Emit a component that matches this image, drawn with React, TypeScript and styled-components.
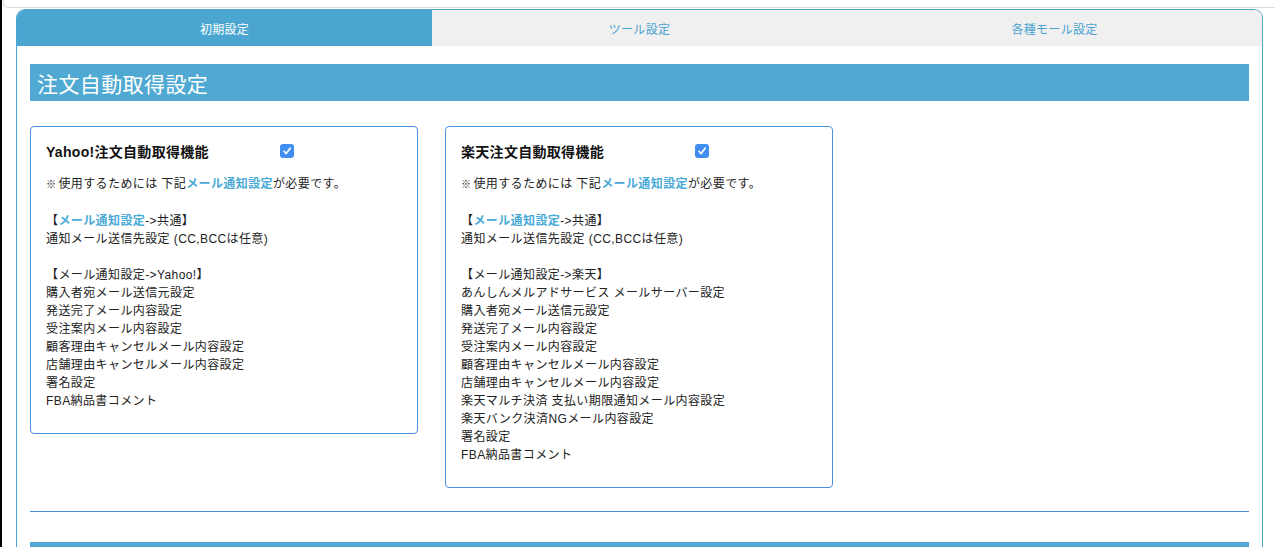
import React from "react";
import styled, { createGlobalStyle } from "styled-components";

const GlobalStyle = createGlobalStyle`
  html, body { margin: 0; padding: 0; background: #fff; }
  body {
    font-family: "Liberation Sans", "Noto Sans CJK JP", sans-serif;
    color: #222;
    overflow: hidden;
  }
`;

const Page = styled.div`
  height: 547px;
  border-left: 2px solid #000;
  box-sizing: border-box;
  overflow: hidden;
`;

const TopStrip = styled.div`
  height: 7px;
  margin-left: 1px;
  border-left: 1px solid #dcdcdc;
  border-bottom: 1px solid #dcdcdc;
  border-bottom-left-radius: 5px;
`;

const Panel = styled.div`
  margin: 1px 0 0 14px;
  width: 1247px;
  box-sizing: border-box;
  border: 1px solid #4aa5d2;
  border-bottom: none;
  border-radius: 9px 9px 0 0;
  overflow: hidden;
  min-height: 560px;
`;

const Tabs = styled.div`
  display: grid;
  grid-template-columns: repeat(3, 1fr);
  height: 36px;
`;

const Tab = styled.div<{ $active?: boolean }>`
  display: flex;
  align-items: center;
  justify-content: center;
  font-size: 12px;
  letter-spacing: 0.3px;
  background: ${(p) => (p.$active ? "#4aa6d0" : "#f0f0f0")};
  color: ${(p) => (p.$active ? "#fff" : "#4aa3d0")};
`;

const Content = styled.div`
  padding: 18px 13px 0 13px;
`;

const SectionBar = styled.div`
  height: 37px;
  background: #4fa9d2;
  color: #fff;
  font-size: 21px;
  letter-spacing: 0.4px;
  display: flex;
  align-items: center;
  padding-left: 7px;
`;

const CardRow = styled.div`
  display: flex;
  align-items: flex-start;
  gap: 27px;
  margin-top: 25px;
`;

const Card = styled.div`
  width: 388px;
  box-sizing: border-box;
  border: 1px solid #4a90e2;
  border-radius: 4px;
  padding: 14px 15px 23px 15px;
`;

const TitleRow = styled.div`
  display: flex;
  align-items: center;
  height: 20px;
`;

const Title = styled.span`
  width: 234px;
  font-size: 14px;
  font-weight: bold;
  letter-spacing: 0.3px;
  color: #111;
`;

const Check = styled.span`
  width: 14px;
  height: 14px;
  border-radius: 3px;
  background: #3f8ef0;
  display: inline-flex;
  align-items: center;
  justify-content: center;
  margin-top: -1px;
`;

const Body = styled.div`
  margin-top: 14px;
  font-size: 12px;
  line-height: 18px;
  letter-spacing: 0.4px;
  color: #222;
`;

const Line = styled.div`
  min-height: 18px;
  white-space: nowrap;
`;

const Note = styled.span`
  font-size: 10px;
  margin-right: 2px;
`;

const Link = styled.span`
  color: #4aaad6;
  font-weight: bold;
`;

const Rule = styled.div`
  height: 1px;
  background: #4a90d9;
  margin-top: 23px;
`;

const NextBar = styled.div`
  height: 37px;
  background: #4fa9d2;
  margin-top: 30px;
`;

const CheckIcon = () => (
  <Check>
    <svg width="10" height="10" viewBox="0 0 10 10">
      <path d="M2 5.3 L4.1 7.6 L8.2 2.2" fill="none" stroke="#fff" strokeWidth="1.7" strokeLinecap="round" strokeLinejoin="round" />
    </svg>
  </Check>
);

type CardData = { title: string; mall: string; items: string[] };

const cards: CardData[] = [
  {
    title: "Yahoo!注文自動取得機能",
    mall: "Yahoo!",
    items: [
      "購入者宛メール送信元設定",
      "発送完了メール内容設定",
      "受注案内メール内容設定",
      "顧客理由キャンセルメール内容設定",
      "店舗理由キャンセルメール内容設定",
      "署名設定",
      "FBA納品書コメント",
    ],
  },
  {
    title: "楽天注文自動取得機能",
    mall: "楽天",
    items: [
      "あんしんメルアドサービス メールサーバー設定",
      "購入者宛メール送信元設定",
      "発送完了メール内容設定",
      "受注案内メール内容設定",
      "顧客理由キャンセルメール内容設定",
      "店舗理由キャンセルメール内容設定",
      "楽天マルチ決済 支払い期限通知メール内容設定",
      "楽天バンク決済NGメール内容設定",
      "署名設定",
      "FBA納品書コメント",
    ],
  },
];

export default function App() {
  return (
    <>
      <GlobalStyle />
      <Page>
        <TopStrip />
        <Panel>
          <Tabs>
            <Tab $active>初期設定</Tab>
            <Tab>ツール設定</Tab>
            <Tab>各種モール設定</Tab>
          </Tabs>
          <Content>
            <SectionBar>注文自動取得設定</SectionBar>
            <CardRow>
              {cards.map((c) => (
                <Card key={c.mall}>
                  <TitleRow>
                    <Title>{c.title}</Title>
                    <CheckIcon />
                  </TitleRow>
                  <Body>
                    <Line>
                      <Note>※</Note>使用するためには 下記<Link>メール通知設定</Link>が必要です。
                    </Line>
                    <Line />
                    <Line>
                      【<Link>メール通知設定</Link>-&gt;共通】
                    </Line>
                    <Line>通知メール送信先設定 (CC,BCCは任意)</Line>
                    <Line />
                    <Line>【メール通知設定-&gt;{c.mall}】</Line>
                    {c.items.map((it) => (
                      <Line key={it}>{it}</Line>
                    ))}
                  </Body>
                </Card>
              ))}
            </CardRow>
            <Rule />
            <NextBar />
          </Content>
        </Panel>
      </Page>
    </>
  );
}
